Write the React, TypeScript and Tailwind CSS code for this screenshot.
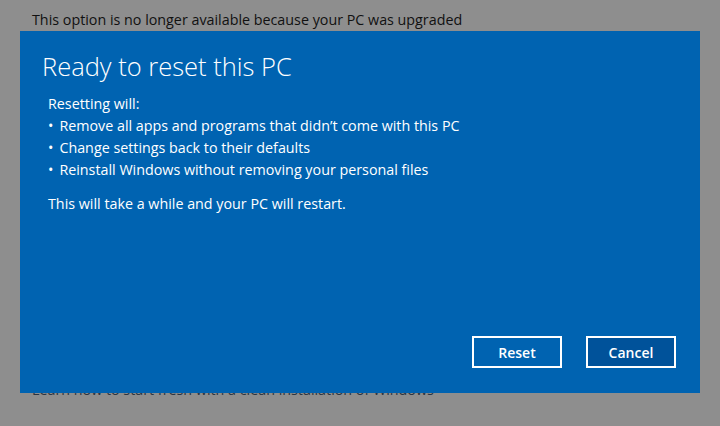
export default function App() {
  return (
    <div className="relative h-[426px] w-[720px] overflow-hidden bg-[#8e8e8e] font-['Open_Sans',sans-serif]">
      <p className="pl-[32px] pt-[10px] text-[14.3px] leading-[20px] text-[#111]">
        This option is no longer available because your PC was upgraded
      </p>
      <p className="pl-[32px] pt-[350px] text-[14.3px] leading-[20px] text-[#2a3440]">
        Learn how to start fresh with a clean installation of Windows
      </p>

      {/* dialog */}
      <div className="absolute left-[20px] top-[31px] flex h-[362px] w-[680px] flex-col bg-[#0063b1] text-white">
        <h1 className="pl-[22px] pt-[19px] text-[25.5px] font-light leading-[32px]">
          Ready to reset this PC
        </h1>
        <div className="pl-[28px] pt-[11px] text-[14.3px] leading-[22px]">
          <p>Resetting will:</p>
          <ul>
            <li className="flex gap-[6px]">
              <span>•</span>Remove all apps and programs that didn’t come with this PC
            </li>
            <li className="flex gap-[6px]">
              <span>•</span>Change settings back to their defaults
            </li>
            <li className="flex gap-[6px]">
              <span>•</span>Reinstall Windows without removing your personal files
            </li>
          </ul>
          <p className="pt-[12px]">This will take a while and your PC will restart.</p>
        </div>
        <div className="mt-auto flex justify-end gap-[24px] pb-[25px] pr-[24px]">
          <button className="h-[32px] w-[90px] border-2 border-white bg-[#0063b1] text-[14px] font-semibold">
            Reset
          </button>
          <button className="h-[32px] w-[90px] border-2 border-white bg-[#00529a] text-[14px] font-semibold">
            Cancel
          </button>
        </div>
      </div>
    </div>
  );
}
